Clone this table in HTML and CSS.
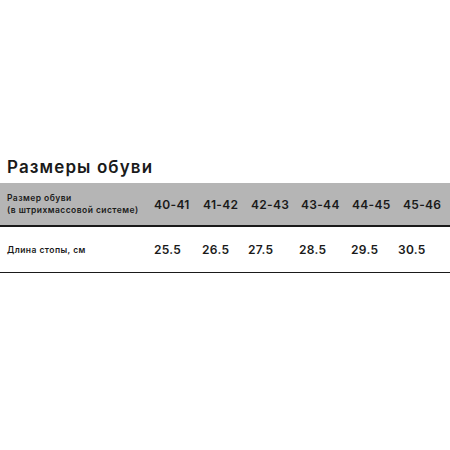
FILE: index.html
```html
<!DOCTYPE html>
<html lang="ru">
<head>
<meta charset="utf-8">
<link rel="stylesheet" href="styles.css">
</head>
<body>
<div class="page">
  <h1 class="title">Размеры обуви</h1>
  <div class="table">
    <div class="row head">
      <div class="label">Размер обуви<br>(в штрихмассовой системе)</div>
      <div class="cell">40-41</div>
      <div class="cell">41-42</div>
      <div class="cell">42-43</div>
      <div class="cell">43-44</div>
      <div class="cell">44-45</div>
      <div class="cell">45-46</div>
    </div>
    <div class="row body">
      <div class="label">Длина стопы, см</div>
      <div class="cell">25.5</div>
      <div class="cell">26.5</div>
      <div class="cell">27.5</div>
      <div class="cell">28.5</div>
      <div class="cell">29.5</div>
      <div class="cell">30.5</div>
    </div>
  </div>
</div>
</body>
</html>
```
FILE: styles.css
```css
html, body {
  margin: 0;
  padding: 0;
  background: #ffffff;
}
body {
  font-family: "Inter", "DejaVu Sans", sans-serif;
  color: #1a1a1a;
  width: 450px;
  height: 450px;
  overflow: hidden;
}
.page {
  padding-top: 157px;
}
.title {
  margin: 0 0 6px 7px;
  font-size: 17px;
  line-height: 20px;
  font-weight: 600;
  letter-spacing: 1.1px;
}
.row {
  display: grid;
  align-items: center;
}
.head {
  height: 42px;
  background: #b5b5b5;
  border-bottom: 2px solid #1a1a1a;
  grid-template-columns: 154px 49px 48px 50px 51px 51px 1fr;
}
.body {
  height: 45px;
  border-bottom: 1.5px solid #1a1a1a;
  grid-template-columns: 154px 48px 46px 51px 52px 47px 1fr;
}
.label {
  padding-left: 7px;
  font-size: 8.5px;
  line-height: 12px;
  font-weight: 600;
  letter-spacing: 0.45px;
}
.cell {
  font-size: 12px;
  font-weight: 600;
  letter-spacing: 0.3px;
  white-space: nowrap;
}
```
